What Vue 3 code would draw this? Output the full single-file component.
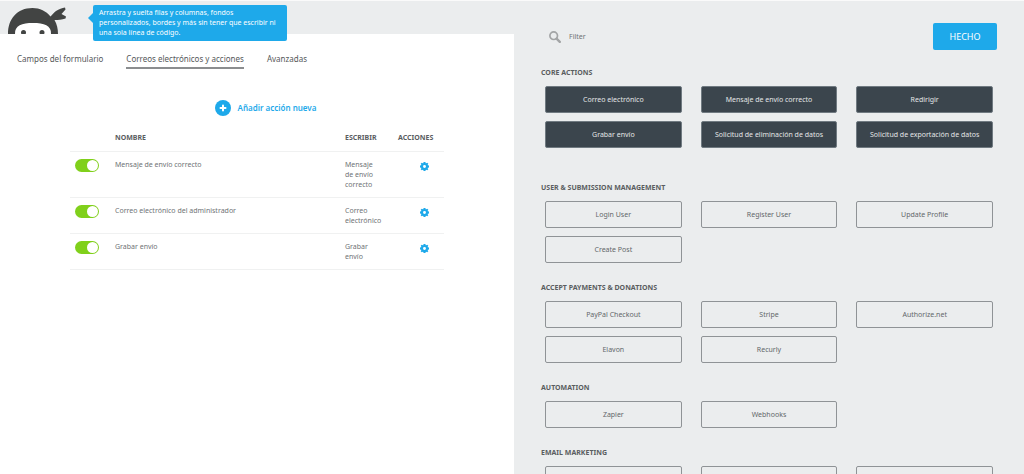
<script setup>
import { ref } from 'vue'

const tabs = ['Campos del formulario', 'Correos electrónicos y acciones', 'Avanzadas']
const activeTab = ref(1)
const filter = ref('')

const actions = ref([
  { name: 'Mensaje de envío correcto', type: 'Mensaje de\u00a0envío correcto', on: true },
  { name: 'Correo electrónico del administrador', type: 'Correo electrónico', on: true },
  { name: 'Grabar envío', type: 'Grabar envío', on: true },
])

const sections = [
  {
    title: 'CORE ACTIONS',
    core: true,
    items: [
      'Correo electrónico',
      'Mensaje de envío correcto',
      'Redirigir',
      'Grabar envío',
      'Solicitud de eliminación de datos',
      'Solicitud de exportación de datos',
    ],
  },
  { title: 'USER & SUBMISSION MANAGEMENT', items: ['Login User', 'Register User', 'Update Profile', 'Create Post'] },
  { title: 'ACCEPT PAYMENTS & DONATIONS', items: ['PayPal Checkout', 'Stripe', 'Authorize.net', 'Elavon', 'Recurly'] },
  { title: 'AUTOMATION', items: ['Zapier', 'Webhooks'] },
  { title: 'EMAIL MARKETING', items: ['', '', ''] },
]
</script>

<template>
  <div class="page">
    <main class="builder">
      <header class="bar">
        <svg class="logo" viewBox="0 0 60 28" aria-hidden="true">
          <path
            d="M0 28C0 13 9 2 24.500 2C32 2 38 5 42.500 10.500C44 9 46 6.500 48 5C51 3 54 2 57 1.500L57.500 3.500L53.500 8L58 10.500L57.500 12.500C54 13.500 50 14 46.500 14C49 18 50 23 50 28Z"
            fill="#424443"
          />
          <path d="M7 28C6.500 19.500 14 17 25 17C36 17 43.500 19.500 43 28Z" fill="#fff" />
          <circle cx="15.500" cy="26.500" r="2.500" fill="#424443" />
          <circle cx="34" cy="26.500" r="2.500" fill="#424443" />
        </svg>
        <p class="tip">
          Arrastra y suelta filas y columnas, fondos<br />
          personalizados, bordes y más sin tener que escribir ni<br />
          una sola línea de código.
        </p>
      </header>

      <nav class="tabs">
        <a
          v-for="(tab, i) in tabs"
          :key="tab"
          href="#"
          :class="{ active: i === activeTab }"
          @click.prevent="activeTab = i"
          >{{ tab }}</a
        >
      </nav>

      <button class="add" type="button">
        <svg viewBox="0 0 16 16" aria-hidden="true">
          <circle cx="8" cy="8" r="8" fill="#1ea9ea" />
          <path d="M8 5.500V10.500M5.500 8H10.500" stroke="#fff" stroke-width="2" stroke-linecap="round" />
        </svg>
        Añadir acción nueva
      </button>

      <table>
        <colgroup>
          <col class="c-toggle" />
          <col />
          <col class="c-type" />
          <col class="c-act" />
        </colgroup>
        <thead>
          <tr>
            <th></th>
            <th scope="col">NOMBRE</th>
            <th scope="col">ESCRIBIR</th>
            <th scope="col">ACCIONES</th>
          </tr>
        </thead>
        <tbody>
          <tr v-for="(a, i) in actions" :key="a.name">
            <td><input v-model="a.on" class="toggle" type="checkbox" :aria-labelledby="'action-' + i" /></td>
            <td :id="'action-' + i">{{ a.name }}</td>
            <td class="type">{{ a.type }}</td>
            <td>
              <button class="gear" type="button" :aria-labelledby="'action-' + i">
                <svg viewBox="0 0 16 16" aria-hidden="true">
                  <path
                    fill="#1ea9ea"
                    fill-rule="evenodd"
                    d="M6.300 0H9.700L10.100 2L11 2.400L12.900 1.200L14.800 3.100L13.600 5L14 5.900L16 6.300V9.700L14 10.100L13.600 11L14.800 12.900L12.900 14.800L11 13.600L10.100 14L9.700 16H6.300L5.900 14L5 13.600L3.100 14.800L1.200 12.900L2.400 11L2 10.100L0 9.700V6.300L2 5.900L2.400 5L1.200 3.100L3.100 1.200L5 2.400L5.900 2ZM8 5.400A2.600 2.600 0 1 0 8 10.600A2.600 2.600 0 1 0 8 5.400Z"
                  />
                </svg>
              </button>
            </td>
          </tr>
        </tbody>
      </table>
    </main>

    <aside class="drawer">
      <div class="tools">
        <label class="search">
          <svg viewBox="0 0 12 12" aria-hidden="true">
            <circle cx="4.700" cy="4.700" r="3.800" fill="none" stroke="#a3a5a6" stroke-width="1.700" />
            <path d="M7.800 7.800L10.800 10.800" stroke="#a3a5a6" stroke-width="2.400" stroke-linecap="round" />
          </svg>
          <input v-model="filter" type="text" placeholder="Filter" />
        </label>
        <button class="done" type="button">HECHO</button>
      </div>

      <section v-for="s in sections" :key="s.title" :class="{ core: s.core }">
        <h2>{{ s.title }}</h2>
        <div class="grid">
          <button v-for="(item, i) in s.items" :key="i" type="button">{{ item }}</button>
        </div>
      </section>
    </aside>
  </div>
</template>

<style>
body {
  margin: 0;
}
</style>

<style scoped>
.page {
  box-sizing: border-box;
  display: grid;
  grid-template-columns: 514fr 510fr;
  height: 100vh;
  overflow: hidden;
  border-top: 1px solid #fafafa;
  background: #fff;
  color: #6f7376;
  font: 7px/10px 'Noto Sans', 'Open Sans', sans-serif;
}
button,
input {
  font: inherit;
  color: inherit;
}
button {
  cursor: pointer;
}
svg {
  display: block;
}

.bar {
  display: flex;
  align-items: flex-start;
  box-sizing: border-box;
  height: 33px;
  padding-left: 8px;
  background: #ebedee;
}
.logo {
  width: 60px;
  height: 28px;
  margin-top: 5px;
}
.tip {
  position: relative;
  box-sizing: border-box;
  width: 194px;
  margin: 4px 0 0 25px;
  padding: 3px 6px;
  border-radius: 2px;
  background: #1ea9ea;
  color: #fff;
  white-space: nowrap;
}
.tip::before {
  content: '';
  position: absolute;
  left: -5px;
  top: 8px;
  border: 5px solid transparent;
  border-left: 0;
  border-right-color: #1ea9ea;
}

.tabs {
  display: flex;
  gap: 23px;
  padding: 18px 17px 0;
  font-size: 8px;
  line-height: 14px;
}
.tabs a {
  padding-bottom: 1px;
  border-bottom: 2px solid transparent;
  color: #55585a;
  text-decoration: none;
}
.tabs .active {
  border-bottom-color: #8b8d8f;
}

.add {
  display: flex;
  align-items: center;
  gap: 7px;
  margin: 31px auto 0;
  padding: 0 0 0 17px;
  border: 0;
  background: none;
  color: #1ea9ea;
  font-size: 8px;
  font-weight: 600;
}
.add svg {
  width: 16px;
  height: 16px;
}

table {
  width: calc(100% - 140px);
  margin: 10px 70px 0;
  border-collapse: separate;
  border-spacing: 0;
  table-layout: fixed;
}
.c-toggle {
  width: 45px;
}
.c-type {
  width: 53px;
}
.c-act {
  width: 46px;
}
th {
  padding: 7px 0 8px;
  border-bottom: 1px solid #f0f1f1;
  color: #5a5d5f;
  font-weight: 700;
  text-align: left;
}
td {
  padding: 8px 0 7px;
  border-bottom: 1px solid #f0f1f1;
  vertical-align: top;
}
.type {
  padding-right: 12px;
}
.toggle {
  appearance: none;
  display: block;
  box-sizing: border-box;
  width: 24px;
  height: 13px;
  margin: -1px 0 -2px 5px;
  padding: 1px;
  border-radius: 7px;
  background: #c5c8ca;
  cursor: pointer;
}
.toggle::before {
  content: '';
  display: block;
  width: 11px;
  height: 11px;
  border-radius: 50%;
  background: #fff;
}
.toggle:checked {
  background: #80d01b;
}
.toggle:checked::before {
  margin-left: 11px;
}
.gear {
  display: block;
  margin: 2px 0 0 22px;
  padding: 0;
  border: 0;
  background: none;
}
.gear svg {
  width: 9px;
  height: 9px;
}

.drawer {
  box-sizing: border-box;
  min-width: 0;
  padding: 22px 31px 0 27px;
  background: #ebedee;
}
.tools {
  display: flex;
  justify-content: space-between;
  margin: 0 -4px 17px 8px;
}
.search {
  display: flex;
  align-items: center;
  gap: 8px;
}
.search svg {
  width: 12px;
  height: 12px;
}
.search input {
  width: 200px;
  padding: 0;
  border: 0;
  outline: 0;
  background: none;
}
.search input::placeholder {
  color: #6f7376;
  opacity: 1;
}
.done {
  width: 64px;
  height: 27px;
  padding: 0;
  border: 0;
  border-radius: 2px;
  background: #1ea9ea;
  color: #fff;
  font-size: 9px;
}

section {
  margin-bottom: 19px;
}
.core {
  margin-bottom: 34px;
}
h2 {
  margin: 0 0 7px;
  color: #5a5d5f;
  font-size: 7px;
  font-weight: 700;
  line-height: 12px;
}
.grid {
  display: grid;
  grid-template-columns: repeat(3, 1fr);
  gap: 8px 19px;
  padding-left: 4px;
}
.grid button {
  height: 27px;
  padding: 0;
  border: 1px solid #8f9396;
  border-radius: 2px;
  background: none;
  color: #63676a;
  white-space: nowrap;
}
.core .grid button {
  border-color: #707a81;
  background: #3b454d;
  color: #e4e6e7;
}
</style>
